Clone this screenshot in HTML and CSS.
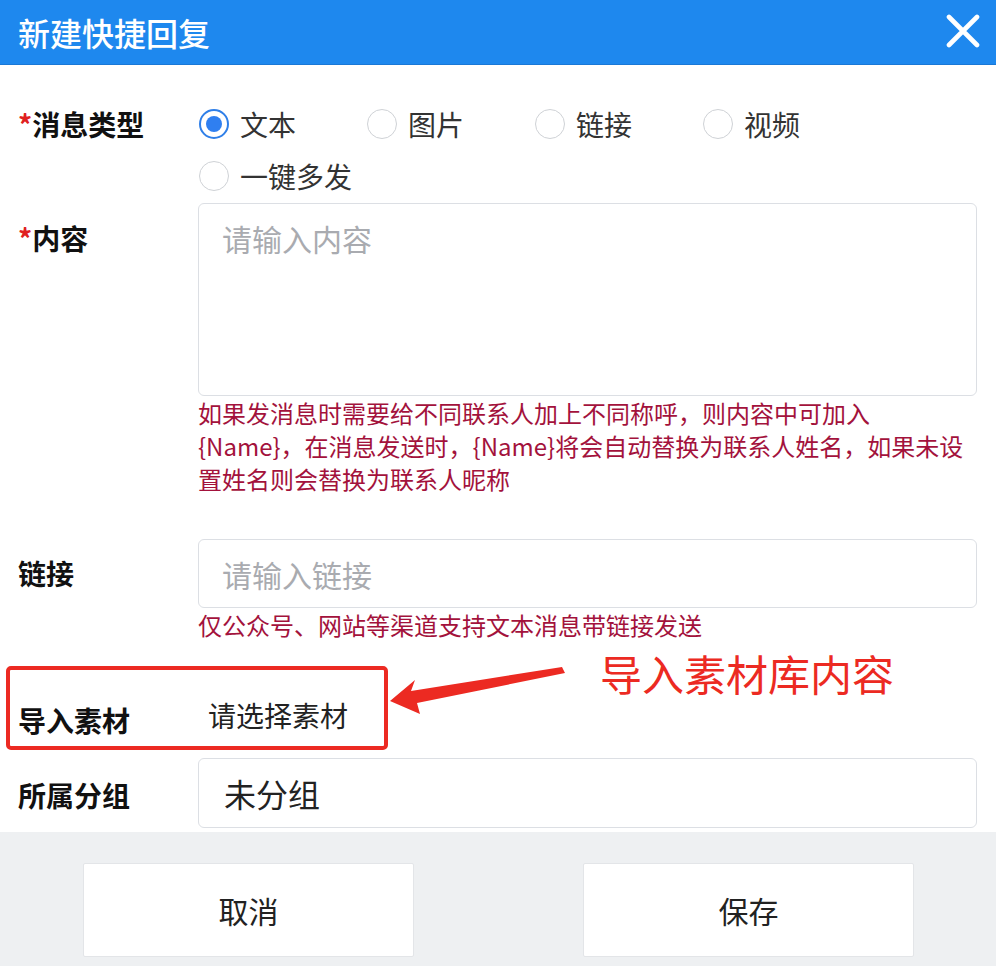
FILE: index.html
```html
<!DOCTYPE html>
<html lang="zh-CN">
<head>
<meta charset="utf-8">
<title>新建快捷回复</title>
<link rel="stylesheet" href="styles.css">
</head>
<body>
<div class="dialog">
  <header class="head">
    <h1 class="title">新建快捷回复</h1>
    <svg class="close" width="34" height="34" viewBox="0 0 34 34" aria-label="关闭">
      <path d="M3 3 L31 31 M31 3 L3 31" stroke="#fff" stroke-width="4.6" stroke-linecap="round" fill="none"/>
    </svg>
  </header>

  <main class="form">
    <div class="row row-type">
      <div class="label"><span class="req">*</span>消息类型</div>
      <div class="radios">
        <label class="radio checked"><span class="dot"></span><span class="rtext">文本</span></label>
        <label class="radio"><span class="dot"></span><span class="rtext">图片</span></label>
        <label class="radio"><span class="dot"></span><span class="rtext">链接</span></label>
        <label class="radio"><span class="dot"></span><span class="rtext">视频</span></label>
        <label class="radio"><span class="dot"></span><span class="rtext">一键多发</span></label>
      </div>
    </div>

    <div class="row row-content">
      <div class="label label-top"><span class="req">*</span>内容</div>
      <div class="field">
        <div class="textarea"><span class="ph">请输入内容</span></div>
        <p class="hint">如果发消息时需要给不同联系人加上不同称呼，则内容中可加入{Name}，在消息发送时，{Name}将会自动替换为联系人姓名，如果未设置姓名则会替换为联系人昵称</p>
      </div>
    </div>

    <div class="row row-link">
      <div class="label label-mid">链接</div>
      <div class="field">
        <div class="input"><span class="ph">请输入链接</span></div>
        <p class="hint">仅公众号、网站等渠道支持文本消息带链接发送</p>
      </div>
    </div>

    <div class="row row-import">
      <div class="label label-import">导入素材</div>
      <div class="pick">请选择素材</div>
      <div class="mark"></div>
      <svg class="arrow" width="180" height="52" viewBox="388 668 180 52">
        <polygon points="390,703 415,682 411,693 562,669 565,675 417,705 420,716" fill="#ec2a22"/>
      </svg>
      <div class="note">导入素材库内容</div>
    </div>

    <div class="row row-group">
      <div class="label label-group">所属分组</div>
      <div class="field">
        <div class="input input-group"><span class="val">未分组</span></div>
      </div>
    </div>
  </main>

  <footer class="foot">
    <button class="btn">取消</button>
    <button class="btn">保存</button>
  </footer>
</div>
</body>
</html>
```

FILE: styles.css
```css
* { box-sizing: border-box; }
html, body { margin: 0; padding: 0; background: #fff; }
body {
  font-family: "Noto Sans CJK SC", "Noto Sans", "Liberation Sans", sans-serif;
  color: #222;
}
.dialog { width: 996px; height: 966px; display: flex; flex-direction: column; overflow: hidden; }

.head {
  height: 65px;
  flex: none;
  background: #1e88ee;
  display: flex;
  align-items: center;
  justify-content: space-between;
  padding: 0 16px 0 18px;
  border-bottom: 1px solid #1a78d6;
}
.title { margin: 0; font-size: 32px; font-weight: 500; color: #fff; line-height: 40px; }
.close { display: block; margin-top: -2px; }

.form { flex: 1; padding: 33px 19px 0 18px; background: #fff; }
.row { display: flex; position: relative; }
.label {
  width: 180px;
  flex: none;
  font-size: 28px;
  font-weight: 700;
  color: #111;
  line-height: 52px;
}
.req { color: #e02020; font-weight: 700; }
.field { flex: 1; }

.radios { flex: 1; display: flex; flex-wrap: wrap; }
.radio { width: 168px; height: 52px; display: flex; align-items: center; }
.dot {
  width: 30px; height: 30px; border-radius: 50%;
  border: 1.5px solid #cfd2d6; background: #fff;
  margin: 0 11px 0 1px;
  display: flex; align-items: center; justify-content: center;
  flex: none;
}
.checked .dot { border: 2px solid #2f7fe8; }
.checked .dot::after { content: ""; width: 16px; height: 16px; border-radius: 50%; background: #2f7ff0; }
.rtext { font-size: 28px; color: #333; line-height: 1; }

.row-content { margin-top: 1px; }
.label-top { line-height: 40px; padding-top: 15px; }
.textarea {
  height: 193px;
  border: 1px solid #dcdfe4;
  border-radius: 6px;
  padding: 14px 23px;
  line-height: 40px;
}
.ph { font-size: 30px; color: #a9abb0; }
.hint {
  margin: 0;
  width: 776px;
  font-size: 24px;
  line-height: 33px;
  color: #a3123c;
}

.row-link { margin-top: 44px; }
.label-mid { line-height: 69px; }
.input {
  height: 69px;
  border: 1px solid #dcdfe4;
  border-radius: 6px;
  padding: 0 23px;
  display: flex; align-items: center;
}

.row-import { margin-top: 49px; height: 60px; }
.label-import { line-height: 60px; }
.pick { font-size: 28px; color: #222; line-height: 50px; padding-left: 10px; }
.mark {
  position: absolute;
  left: -12px; top: -24px;
  width: 382px; height: 84px;
  border: 4px solid #ec2a22;
  border-radius: 5px;
}
.arrow { position: absolute; left: 370px; top: -24px; }
.note {
  position: absolute;
  left: 582px; top: -43px;
  font-size: 42px; line-height: 52px;
  color: #ec2a22;
}

.row-group { margin-top: 8px; }
.label-group { line-height: 74px; }
.input-group { height: 70px; padding-left: 25px; }
.val { font-size: 32px; color: #222; }

.foot {
  height: 136px;
  flex: none;
  background: #eef0f2;
  display: flex;
  padding: 31px 0 0 83px;
  gap: 169px;
}
.btn {
  width: 331px; height: 94px;
  background: #fff;
  border: 1px solid #e3e5e8;
  border-radius: 2px;
  font-family: inherit;
  font-size: 30px;
  color: #222;
}
```
